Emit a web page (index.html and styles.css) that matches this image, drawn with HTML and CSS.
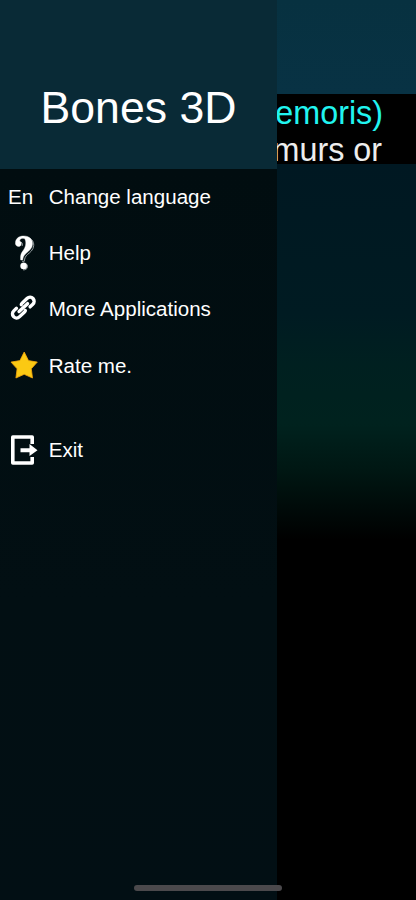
FILE: index.html
```
<!DOCTYPE html>
<html lang="en">
<head>
<meta charset="utf-8">
<meta name="viewport" content="width=device-width">
<title>Bones 3D</title>
<link rel="stylesheet" href="styles.css">
</head>
<body>
<div class="app">
  <aside class="drawer">
    <header class="drawer-header"><h1>Bones 3D</h1></header>
    <nav class="menu">
      <a class="item"><span class="icon lang">En</span><span>Change language</span></a>
      <a class="item"><span class="icon">
        <svg width="32" height="40" viewBox="0 0 32 40">
          <g class="mark-shadow">
            <path d="M18 4.500C23 5 26 8 25.700 12.500C25.400 17 22 19.500 19.500 21.500C17.500 23.300 16.600 25 16.300 28.300H14"/>
            <path d="M13 9C14.500 10 14.800 11.500 14 13"/>
            <path d="M19 31.500C20.500 34.500 18.500 37.300 15 36.800"/>
          </g>
          <g class="mark">
            <path d="M7.500 11C7 6 10.500 3 15.700 3C21 3 24.500 6 24.500 10.600C24.500 15 21.500 17.500 18.500 20C16 22.200 15 24 14.700 27H12.700C12.200 23 12.800 20.500 15 17.700C16.800 15.300 17.800 13 17.800 10C17.800 7 17 5.300 15 5.300C13 5.300 11.800 6.400 11.600 8C13.200 8.800 13.700 10.300 13 11.900C12 14.200 8 13.900 7.500 11Z"/>
            <circle cx="15.700" cy="32.900" r="3.200"/>
          </g>
        </svg></span><span>Help</span></a>
      <a class="item"><span class="icon">
        <svg width="32" height="32" viewBox="0 0 32 32">
          <g class="link" transform="translate(15.300 14.600) rotate(-43)">
            <path d="M0.500 -3.500Q1 -4.100 2.500 -4.100H9.200A4.100 4.100 0 0 1 9.200 4.100H5.500"/>
            <path d="M-0.500 3.500Q-1 4.100 -2.500 4.100H-9.200A4.100 4.100 0 0 1 -9.200 -4.100H-5.500"/>
            <path d="M-5.800 0H5.800"/>
          </g>
        </svg></span><span>More Applications</span></a>
      <a class="item"><span class="icon">
        <svg width="32" height="32" viewBox="0 0 32 32">
          <path class="star" d="M16.200 2L20.500 10.600L29.300 12.100L23.300 18.800L24.500 28L16.200 24.300L7.900 28L9.100 18.800L3 12.100L11.900 10.600Z"/>
        </svg></span><span>Rate me.</span></a>
      <a class="item exit"><span class="icon">
        <svg width="32" height="32" viewBox="0 0 32 32">
          <path class="door" d="M24.200 10V3H4.800V29H24.200V23"/>
          <path class="arrow" d="M12.500 14.200H21.500V10.100L29.500 16.200L21.500 22V18.200H12.500Z"/>
        </svg></span><span>Exit</span></a>
    </nav>
  </aside>
  <main class="viewer">
    <div class="toolbar"></div>
    <div class="caption">
      <div class="term">emoris)</div>
      <div class="detail">murs or</div>
    </div>
    <div class="scene"></div>
  </main>
  <div class="home-indicator"></div>
</div>
</body>
</html>
```
FILE: styles.css
```
* { box-sizing: border-box; }
body { margin: 0; background: #000; }
.app {
  position: relative;
  display: flex;
  width: 416px;
  height: 900px;
  overflow: hidden;
  font-family: "Liberation Sans", Arial, sans-serif;
  color: #fff;
}
.drawer {
  width: 277px;
  flex: none;
  background: linear-gradient(#010d10 168px, #020f13 600px, #020f14);
}
.drawer-header {
  height: 168.500px;
  padding-top: 82px;
  background: #092a36;
  text-align: center;
}
h1 { margin: 0; font-size: 44.600px; font-weight: 400; line-height: 51px; }
.menu { display: flex; flex-direction: column; padding-top: .2px; }
.item {
  display: flex;
  align-items: center;
  height: 56.250px;
  padding-left: 8px;
  font-size: 20.550px;
  white-space: nowrap;
}
.icon { display: flex; align-items: center; width: 40.700px; flex: none; }
.exit { margin-top: 28px; }
svg { display: block; }
.mark { fill: #fff; stroke: #fff; stroke-width: .4; }
.mark-shadow { fill: none; stroke: #aab2b4; stroke-width: .9; }
.link { fill: none; stroke: #fff; stroke-width: 3.400; stroke-linecap: round; }
.star { fill: #fbc913; stroke: #f2a50d; stroke-width: .8; stroke-linejoin: round; }
.door { fill: none; stroke: #fff; stroke-width: 3.600; stroke-linejoin: round; }
.arrow { fill: #fff; }
.viewer {
  flex: 1;
  min-width: 0;
  display: flex;
  flex-direction: column;
  overflow: hidden;
}
.toolbar { height: 94px; background: linear-gradient(#073140, #083244); }
.caption {
  height: 70px;
  overflow: hidden;
  display: flex;
  flex-direction: column;
  align-items: flex-end;
  padding-top: 1px;
  padding-right: 33px;
  background: #000;
  font-size: 32.300px;
  line-height: 37px;
  white-space: nowrap;
}
.term { color: #21f4f0; }
.detail { padding-right: 1px; color: #ededed; }
.scene {
  flex: 1;
  background: linear-gradient(#001822 0, #001b22 150px, #002020 200px, #00221e 260px, #001713 306px, #000 376px);
}
.home-indicator {
  position: absolute;
  left: 134px;
  bottom: 9px;
  width: 148px;
  height: 6px;
  border-radius: 3px;
  background: #4b494c;
}
```
